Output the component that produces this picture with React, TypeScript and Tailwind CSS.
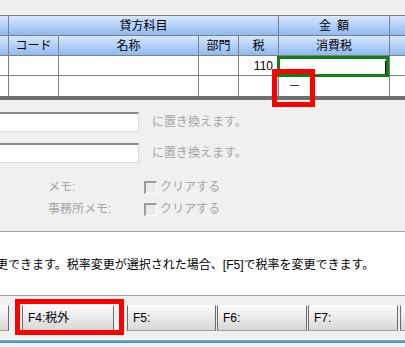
export default function App() {
  const hdr = "h-[20px] flex border-b border-[#808080] bg-linear-to-b from-[#d8e8fe] to-[#8fb9f2] text-black";
  const cell = "flex items-center justify-center border-r border-[#808080] h-full shrink-0";
  const row = "h-[20px] flex border-b border-[#808080] bg-white";
  const btn = "h-[26px] shrink-0 flex items-center pl-[5px] border-l border-r border-l-[#6a6a6a] border-r-[#6a6a6a] border-t border-t-white border-b border-b-[#a0a0a0] bg-linear-to-b from-[#fbfbfb] to-[#d8d8d8] text-black";
  return (
    <div className="relative w-[405px] h-[347px] overflow-hidden bg-[#f0f0f0] text-[12px] leading-[16px] font-['Liberation_Sans','Noto_Sans_CJK_JP',sans-serif]">
      <div className="h-[15px] bg-[#efefef]" />
      {/* table */}
      <div className="relative border-t border-[#808080]">
        <div className={hdr}>
          <div className={`${cell} w-[9px]`} />
          <div className={`${cell} w-[270px]`}>貸方科目</div>
          <div className={`${cell} w-[111px]`}>金&ensp;額</div>
          <div className="flex-1" />
        </div>
        <div className={hdr}>
          <div className={`${cell} w-[9px]`} />
          <div className={`${cell} w-[50px]`}>コード</div>
          <div className={`${cell} w-[140px]`}>名称</div>
          <div className={`${cell} w-[40px]`}>部門</div>
          <div className={`${cell} w-[40px]`}>税</div>
          <div className={`${cell} w-[111px]`}>消費税</div>
          <div className="flex-1" />
        </div>
        <div className={row}>
          <div className={`${cell} w-[9px]`} />
          <div className={`${cell} w-[50px]`} />
          <div className={`${cell} w-[140px]`} />
          <div className={`${cell} w-[40px]`} />
          <div className={`${cell} w-[40px] !justify-end pr-[5px]`}>110</div>
          <div className={`${cell} w-[111px]`} />
          <div className="flex-1" />
        </div>
        <div className="h-[20px] flex bg-white">
          <div className={`${cell} w-[9px]`} />
          <div className={`${cell} w-[50px]`} />
          <div className={`${cell} w-[140px]`} />
          <div className={`${cell} w-[40px]`} />
          <div className={`${cell} w-[40px]`} />
          <div className={`${cell} w-[32px]`}>－</div>
          <div className={`${cell} w-[79px]`} />
          <div className="flex-1" />
        </div>
        <div className="h-[4px] bg-[#6e6e6e]" />
        {/* active cell */}
        <div className="absolute left-[277px] top-[40px] w-[112px] h-[21px] border-[3px] border-[#0f7f12] bg-white" />
        <div className="absolute left-[385px] top-[45px] w-px h-[13px] bg-black" />
      </div>
      {/* options panel */}
      <div className="h-[131px] flex flex-col pt-[12px] text-[#a6a6a6]">
        <div className="flex items-center h-[20px]">
          <div className="w-[139px] h-[20px] bg-white border-t-2 border-t-[#8c8c8c] border-r border-r-[#dcdcdc] border-b border-b-[#dcdcdc]" />
          <span className="ml-[13px]">に置き換えます。</span>
        </div>
        <div className="flex items-center h-[20px] mt-[11px]">
          <div className="w-[139px] h-[20px] bg-white border-t-2 border-t-[#8c8c8c] border-r border-r-[#dcdcdc] border-b border-b-[#dcdcdc]" />
          <span className="ml-[13px]">に置き換えます。</span>
        </div>
        <div className="flex items-center h-[16px] mt-[16px] pl-[48px]">
          <span className="w-[96px]">メモ:</span>
          <div className="w-[13px] h-[13px] bg-[#ebebeb] border-t-2 border-l-2 border-t-[#9c9c9c] border-l-[#9c9c9c] border-r border-b border-r-white border-b-white" />
          <span className="ml-[3px]">クリアする</span>
        </div>
        <div className="flex items-center h-[16px] mt-[6px] pl-[48px]">
          <span className="w-[96px]">事務所メモ:</span>
          <div className="w-[13px] h-[13px] bg-[#ebebeb] border-t-2 border-l-2 border-t-[#9c9c9c] border-l-[#9c9c9c] border-r border-b border-r-white border-b-white" />
          <span className="ml-[3px]">クリアする</span>
        </div>
      </div>
      {/* message */}
      <div className="h-[65px] bg-white border-t border-b border-[#a0a0a0] pt-[25px] whitespace-nowrap text-black">
        <span className="ml-[-16px]">変更できます。税率変更が選択された場合、[F5]で税率を変更できます。</span>
      </div>
      {/* function keys */}
      <div className="h-[44px] flex pt-[9px] bg-[#f0f0f0]">
        <div className={`${btn} w-[9px] !border-l-0 !pl-0`} />
        <div className={`${btn} w-[92px] ml-[13px]`}>F4:税外</div>
        <div className={`${btn} w-[89px] ml-[13px] text-[#222]`}>F5:</div>
        <div className={`${btn} w-[90px] ml-[1px] text-[#222]`}>F6:</div>
        <div className={`${btn} w-[90px] ml-[1px] text-[#222]`}>F7:</div>
        <div className={`${btn} w-[40px] ml-[2px]`} />
      </div>
      <div className="h-px bg-[#a0a0a0]" />
      <div className="h-[2px] bg-[#3d9be0]" />
      {/* annotations */}
      <div className="absolute left-[272px] top-[69px] w-[43px] h-[38px] border-[5px] border-[#ff0000]" />
      <div className="absolute left-[15px] top-[299px] w-[109px] h-[36px] border-[5px] border-[#ff0000]" />
    </div>
  );
}
